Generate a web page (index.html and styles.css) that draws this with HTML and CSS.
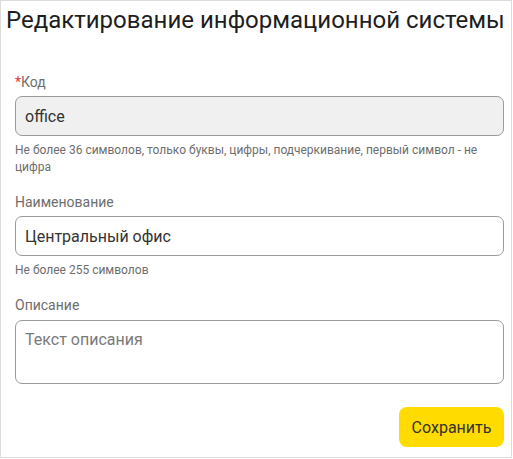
FILE: index.html
```html
<!DOCTYPE html>
<html lang="ru">
<head>
<meta charset="utf-8">
<title>Редактирование информационной системы</title>
<link rel="stylesheet" href="styles.css">
</head>
<body>
<div class="panel">
  <h1 class="title">Редактирование информационной системы</h1>
  <form class="form">
    <div class="field">
      <label class="label"><span class="req">*</span>Код</label>
      <input class="input input-disabled" type="text" value="office" readonly>
      <div class="hint">Не более 36 символов, только буквы, цифры, подчеркивание, первый символ - не цифра</div>
    </div>
    <div class="field">
      <label class="label">Наименование</label>
      <input class="input" type="text" value="Центральный офис">
      <div class="hint">Не более 255 символов</div>
    </div>
    <div class="field">
      <label class="label">Описание</label>
      <textarea class="textarea" placeholder="Текст описания"></textarea>
    </div>
    <div class="actions">
      <button class="btn" type="button">Сохранить</button>
    </div>
  </form>
</div>
</body>
</html>
```

FILE: styles.css
```css
html, body {
  margin: 0;
  padding: 0;
  background: #ffffff;
}

body {
  font-family: Roboto, "Liberation Sans", Arial, sans-serif;
}

.panel {
  box-sizing: border-box;
  width: 512px;
  height: 458px;
  border: 1px solid #dcdcdc;
  padding: 5px 7px 10px 5px;
  display: flex;
  flex-direction: column;
}

.title {
  margin: 0;
  font-size: 24px;
  line-height: 28px;
  font-weight: 400;
  color: #1e1e1e;
  white-space: nowrap;
}

.form {
  margin: 40px 0 0 0;
  padding-left: 9px;
  display: flex;
  flex-direction: column;
}

.field {
  display: flex;
  flex-direction: column;
}

.field + .field {
  margin-top: 18px;
}

.label {
  font-size: 14px;
  line-height: 16px;
  color: #6e6e6e;
  margin-bottom: 6px;
}

.req {
  color: #e53935;
}

.input,
.textarea {
  box-sizing: border-box;
  width: 489px;
  margin: 0;
  border: 1px solid #9a9a9a;
  border-radius: 7px;
  padding: 0 9px;
  font-family: Roboto, "Liberation Sans", Arial, sans-serif;
  font-size: 16px;
  color: #333333;
  background: #ffffff;
  outline: none;
}

.input {
  height: 40px;
  line-height: 19px;
}

.input-disabled {
  background: #f0f0f0;
}

.textarea {
  height: 64px;
  margin-top: 1px;
  padding: 9px 9px;
  line-height: 19px;
  resize: none;
  display: block;
}

.textarea::placeholder {
  color: #7a7a7a;
  opacity: 1;
}

.hint {
  margin-top: 6px;
  font-size: 12px;
  line-height: 17px;
  color: #6e6e6e;
}

.actions {
  display: flex;
  justify-content: flex-end;
  margin-top: 23px;
}

.btn {
  height: 40px;
  width: 105px;
  margin: 0;
  border: none;
  border-radius: 8px;
  background: #ffdb00;
  color: #333333;
  font-family: Roboto, "Liberation Sans", Arial, sans-serif;
  font-size: 16px;
  padding: 0 12px;
  cursor: pointer;
}
```
